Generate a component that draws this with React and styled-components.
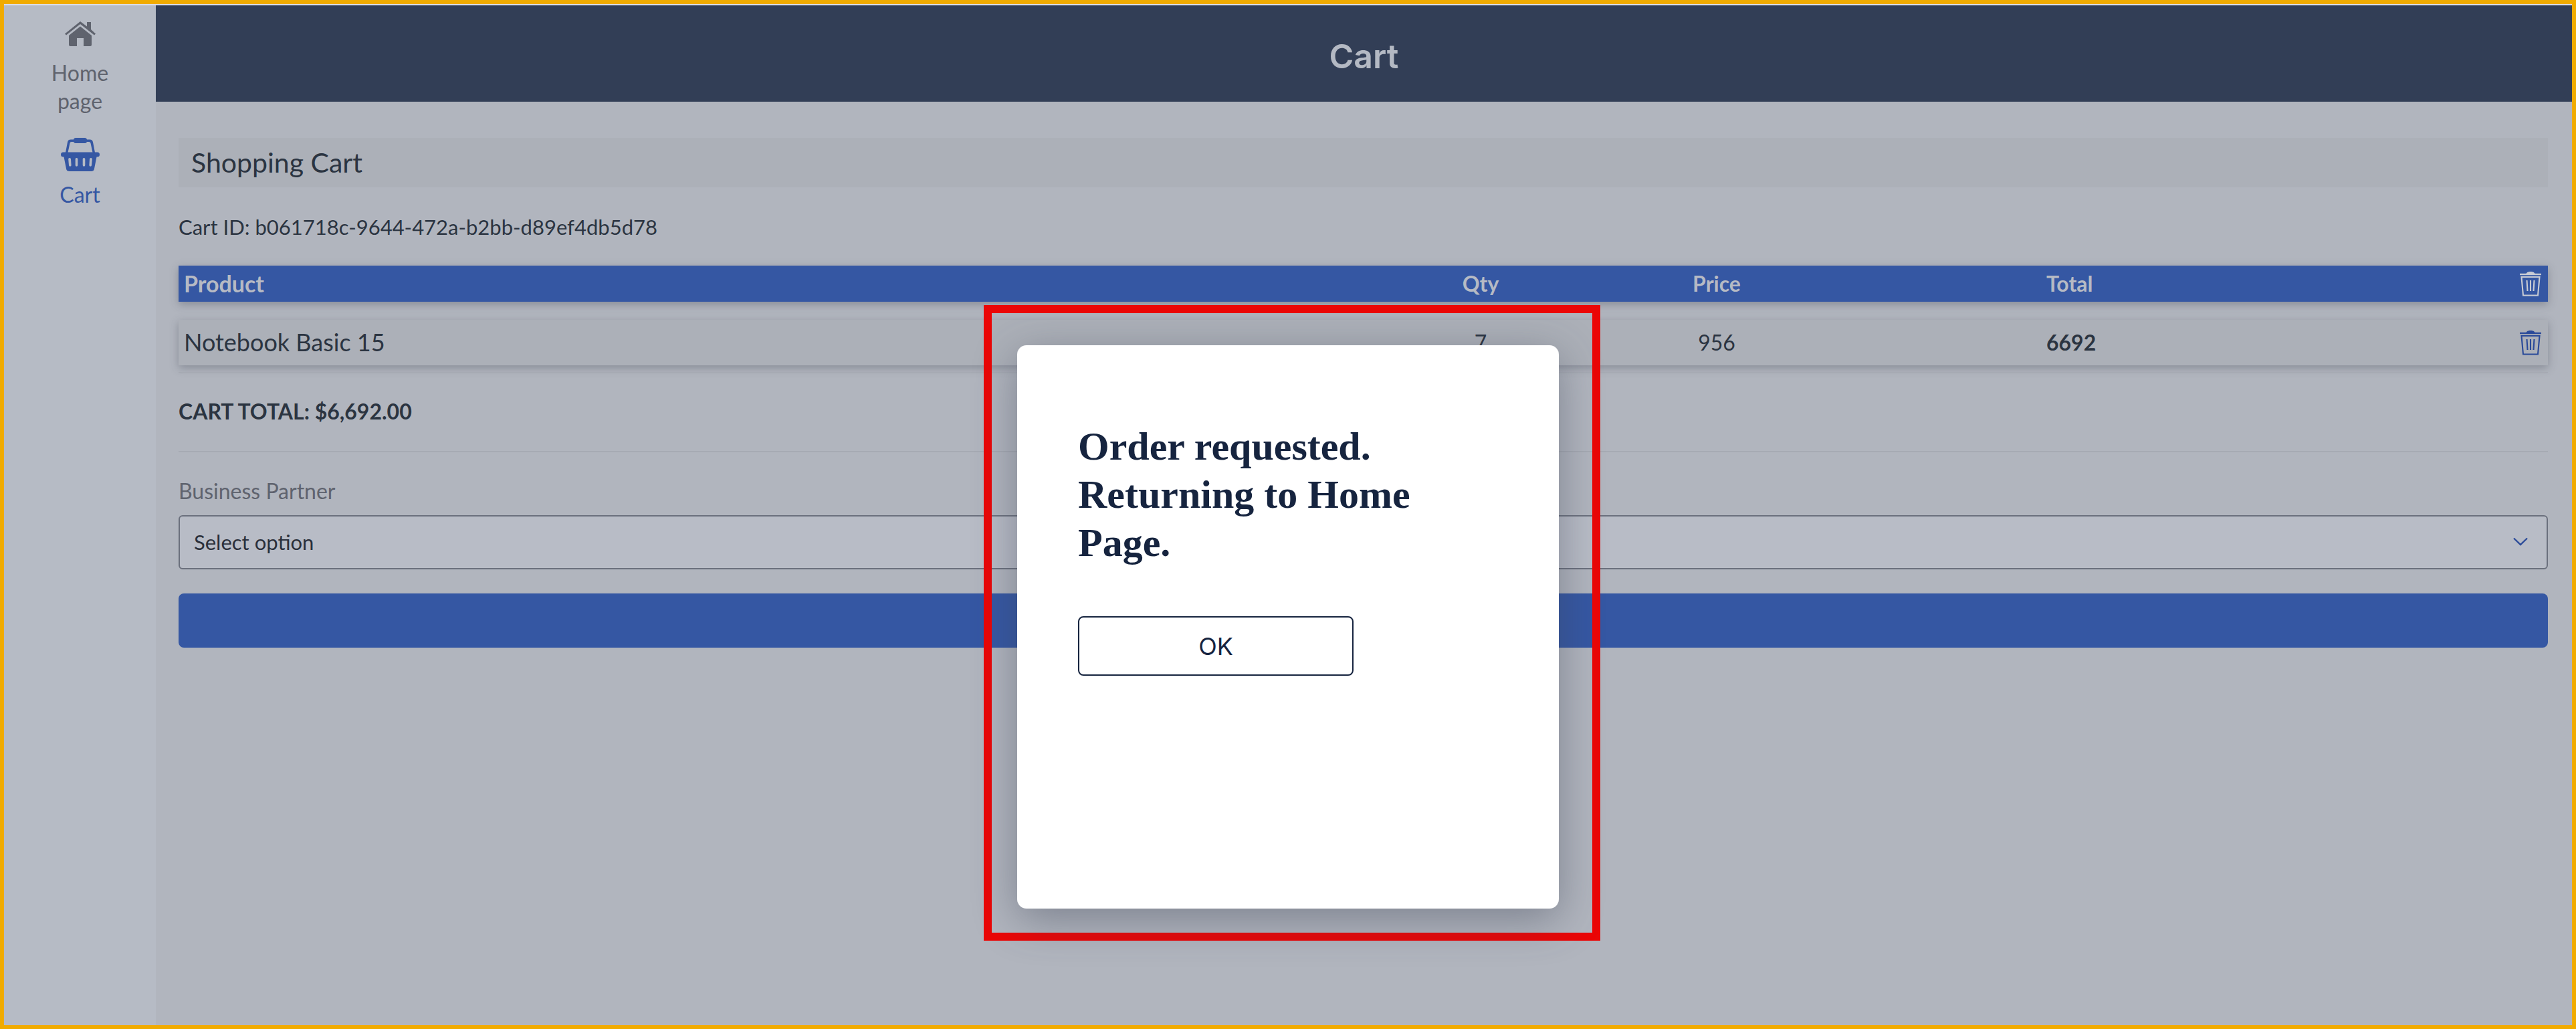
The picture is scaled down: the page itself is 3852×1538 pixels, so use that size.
import React from 'react'
import styled, { createGlobalStyle } from 'styled-components'

const GlobalStyle = createGlobalStyle`
  html, body { margin: 0; padding: 0; }
  body { background: #b1b5be; font-family: Lato, "Liberation Sans", sans-serif; }
  * { box-sizing: border-box; }
`

const Frame = styled.div`
  position: relative;
  width: 3852px;
  height: 1538px;
  overflow: hidden;
  border: 6px solid #f0ab00;
  display: flex;
  flex-direction: column;
  background: #b1b5be;
`
const TopLine = styled.div`
  height: 2px;
  flex: none;
  background: #dcdee3;
`
const Body = styled.div`
  flex: 1;
  display: flex;
  min-height: 0;
`
const Sidebar = styled.nav`
  width: 227px;
  flex: none;
  background: #b6bbc5;
  display: flex;
  flex-direction: column;
  align-items: center;
  padding-top: 24px;
`
const NavItem = styled.div`
  display: flex;
  flex-direction: column;
  align-items: center;
  width: 160px;
  color: ${p => (p.$active ? '#3557a3' : '#5f636e')};
  margin-bottom: ${p => p.$gap || 0}px;
`
const NavLabel = styled.span`
  font-size: 32px;
  line-height: 42px;
  text-align: center;
  margin-top: ${p => p.$top}px;
`
const Main = styled.main`
  flex: 1;
  min-width: 0;
  display: flex;
  flex-direction: column;
`
const Header = styled.header`
  height: 144px;
  flex: none;
  padding-top: 8px;
  background: #323e56;
  display: flex;
  align-items: center;
  justify-content: center;
  color: #b4b9c3;
  font-family: Inter, "Liberation Sans", sans-serif;
  font-size: 50px;
  font-weight: 600;
`
const Content = styled.div`
  padding: 54px 36px 0 34px;
`
const SectionTitle = styled.h2`
  margin: 0;
  height: 74px;
  display: flex;
  align-items: center;
  padding: 0 0 2px 19px;
  background: #acb0b8;
  color: #2b3441;
  font-size: 41px;
  font-weight: 400;
`
const CartId = styled.div`
  margin-top: 40px;
  height: 38px;
  line-height: 38px;
  font-size: 31px;
  color: #2b3441;
`
const TableRow = styled.div`
  display: grid;
  grid-template-columns: 1825px 228px 478px 1fr auto;
  align-items: center;
  padding: 0 9px 0 8px;
  height: ${p => (p.$head ? 54 : 68)}px;
  margin-top: ${p => (p.$head ? 39 : 27)}px;
  background: ${p => (p.$head ? '#3557a3' : '#acb0b8')};
  color: ${p => (p.$head ? '#b6bac4' : '#2b3441')};
  box-shadow: 0 4px 12px rgba(60, 66, 80, 0.35);
`
const Cell = styled.div`
  font-size: ${p => p.$size || 32}px;
  font-weight: ${p => (p.$bold ? 700 : 400)};
  text-align: ${p => (p.$center ? 'center' : 'left')};
  padding-left: ${p => p.$indent || 0}px;
  padding-bottom: 2px;
`
const TrashIcon = styled.svg`
  display: block;
  width: 34px;
  height: 37px;
`
const RowLine = styled.div`
  margin-top: 10px;
  height: 2px;
  background: #a6aab3;
`
const CartTotal = styled.div`
  margin-top: 38px;
  height: 38px;
  line-height: 38px;
  font-size: 32px;
  font-weight: 700;
  color: #2b3441;
`
const Divider = styled.hr`
  margin: 40px 0 0;
  border: 0;
  height: 2px;
  background: #a6aab3;
`
const FieldLabel = styled.label`
  display: block;
  margin-top: 41px;
  height: 36px;
  line-height: 34px;
  font-size: 32px;
  color: #5f636e;
`
const Select = styled.div`
  margin-top: 17px;
  height: 81px;
  display: flex;
  align-items: center;
  justify-content: space-between;
  padding: 0 28px 2px 21px;
  background: #b8bcc6;
  border: 2px solid #6b707d;
  border-radius: 6px;
  color: #2a2f3a;
  font-size: 31px;
`
const SubmitBar = styled.div`
  margin-top: 36px;
  height: 81px;
  background: #3557a3;
  border-radius: 8px;
`
const Overlay = styled.div`
  position: absolute;
  left: 1465px;
  top: 450px;
`
const Highlight = styled.div`
  width: 922px;
  height: 950px;
  border: 12px solid #eb0606;
  padding: 48px 0 0 38px;
`
const Dialog = styled.div`
  width: 810px;
  height: 842px;
  background: #fff;
  border-radius: 14px;
  padding: 115px 91px 0;
  box-shadow: 0 16px 64px rgba(60, 66, 85, 0.45);
`
const DialogText = styled.h1`
  margin: 0;
  width: 560px;
  font-family: "Liberation Serif", "Times New Roman", serif;
  font-size: 60px;
  line-height: 72px;
  font-weight: 700;
  color: #16243f;
`
const OkButton = styled.button`
  display: block;
  margin-top: 74px;
  width: 412px;
  height: 89px;
  background: #fff;
  border: 2px solid #16243f;
  border-radius: 8px;
  color: #16243f;
  font-family: Inter, "Liberation Sans", sans-serif;
  font-size: 36px;
`

function HomeIcon() {
  return (
    <svg width="46" height="37" viewBox="0 0 46 37" fill="#5f636e">
      <path d="M23 0 L33 7.5 V1 H39 V12 L46 18.5 L44 20.5 L23 4 L2 20.5 L0 18.5 Z" />
      <path d="M23 7.5 L40 21 V35 a2 2 0 0 1 -2 2 H28 V25 H18 V37 H8 a2 2 0 0 1 -2 -2 V21 Z" />
    </svg>
  )
}

function BasketIcon() {
  return (
    <svg width="58" height="50" viewBox="0 0 58 50" fill="#3557a3">
      <path d="M22 0 H36 a3 3 0 0 1 3 2.5 H43 C46 2.5 47.5 4 48 6.5 L51 22 H47.5 L44.5 8 C44.2 6.8 43.5 6 42 6 H39 a3 3 0 0 1 -3 2 H22 a3 3 0 0 1 -3 -2 H16 C14.5 6 13.8 6.8 13.5 8 L10.5 22 H7 L10 6.5 C10.5 4 12 2.5 15 2.5 H19 a3 3 0 0 1 3 -2.5 Z" />
      <path fillRule="evenodd" d="M3.5 21.5 H54.5 a3.5 3.5 0 0 1 0 7 H53.5 L50 46 a4.5 4.5 0 0 1 -4.5 4 H12.5 a4.5 4.5 0 0 1 -4.5 -4 L4.5 28.5 H3.5 a3.5 3.5 0 0 1 0 -7 Z M13 30 a2 2 0 0 0 -1.8 2 L12 41 a1.8 1.8 0 0 0 3.6 0 L15 32 a2 2 0 0 0 -2 -2 Z M23.5 30 a1.8 1.8 0 0 0 -1.8 2 V41 a1.8 1.8 0 0 0 3.6 0 V32 a1.8 1.8 0 0 0 -1.8 -2 Z M34.5 30 a1.8 1.8 0 0 0 -1.8 2 V41 a1.8 1.8 0 0 0 3.6 0 V32 a1.8 1.8 0 0 0 -1.8 -2 Z M45 30 a2 2 0 0 0 -2 2 L42.4 41 a1.8 1.8 0 0 0 3.6 0 L46.8 32 a2 2 0 0 0 -1.8 -2 Z" />
    </svg>
  )
}

function Trash({ color }) {
  return (
    <TrashIcon viewBox="0 0 34 37" fill="none" stroke={color} strokeWidth="2.1">
      <path d="M12 2.5 C13 0.5 21 0.5 22 2.5 Z" fill={color} />
      <path d="M1 4 H33" strokeWidth="2.4" />
      <path d="M3.5 8 H30.5 L28 35.5 H6 Z" />
      <path d="M11.5 13 L12.5 29 M17 13 V29 M22.5 13 L21.5 29" />
    </TrashIcon>
  )
}

function Chevron() {
  return (
    <svg width="22" height="13" viewBox="0 0 22 13" fill="none" stroke="#2a4a99" strokeWidth="2.4">
      <path d="M1 1.5 L11 11 L21 1.5" />
    </svg>
  )
}

export default function App() {
  return (
    <>
      <GlobalStyle />
      <Frame>
        <TopLine />
        <Body>
          <Sidebar>
            <NavItem $gap={34}>
              <HomeIcon />
              <NavLabel $top={19}>Home page</NavLabel>
            </NavItem>
            <NavItem $active>
              <BasketIcon />
              <NavLabel $top={14}>Cart</NavLabel>
            </NavItem>
          </Sidebar>
          <Main>
            <Header>Cart</Header>
            <Content>
              <SectionTitle>Shopping Cart</SectionTitle>
              <CartId>Cart ID: b061718c-9644-472a-b2bb-d89ef4db5d78</CartId>
              <TableRow $head>
                <Cell $bold $size={34}>Product</Cell>
                <Cell $bold $center>Qty</Cell>
                <Cell $bold $center>Price</Cell>
                <Cell $bold $indent={254}>Total</Cell>
                <Trash color="#c9ccd4" />
              </TableRow>
              <TableRow>
                <Cell $size={36}>Notebook Basic 15</Cell>
                <Cell $center>7</Cell>
                <Cell $center>956</Cell>
                <Cell $bold $indent={254}>6692</Cell>
                <Trash color="#2a4a99" />
              </TableRow>
              <RowLine />
              <CartTotal>CART TOTAL: $6,692.00</CartTotal>
              <Divider />
              <FieldLabel>Business Partner</FieldLabel>
              <Select>
                <span>Select option</span>
                <Chevron />
              </Select>
              <SubmitBar />
            </Content>
          </Main>
        </Body>
        <Overlay>
          <Highlight>
            <Dialog>
              <DialogText>Order requested. Returning to Home Page.</DialogText>
              <OkButton>OK</OkButton>
            </Dialog>
          </Highlight>
        </Overlay>
      </Frame>
    </>
  )
}
